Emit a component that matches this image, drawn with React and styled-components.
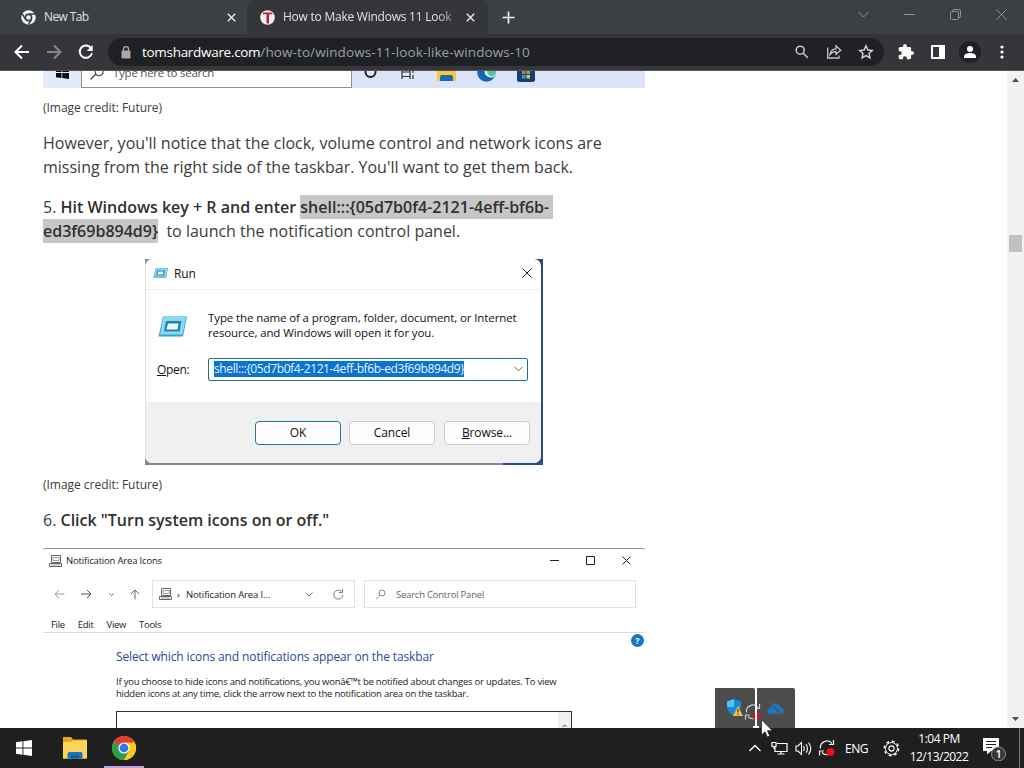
import styled, { createGlobalStyle, css } from "styled-components";

const GlobalStyle = createGlobalStyle`
  * {
    box-sizing: border-box;
  }

  body {
    margin: 0;
    overflow: hidden;
    font-family: "Open Sans", "Noto Sans", sans-serif;
  }

  svg {
    display: block;
    flex: none;
  }
`;

const Screen = styled.div`
  position: relative;
  display: flex;
  flex-direction: column;
  width: 1024px;
  height: 768px;
  overflow: hidden;
  background: #fff;
`;

/* browser frame */

const TabStrip = styled.div`
  display: flex;
  height: 34px;
  flex: none;
  background: #3c4043;
  color: #dfe1e5;
`;

const Tab = styled.div`
  display: flex;
  align-items: center;
  width: ${(props) => props.$width}px;
  padding-left: ${(props) => props.$pad}px;
  background: ${(props) => (props.$active ? "#35363a" : "transparent")};
  border-radius: 8px 8px 0 0;
`;

const TabTitle = styled.div`
  width: ${(props) => props.$width}px;
  margin: 0 ${(props) => props.$gap}px 0 8px;
  overflow: hidden;
  white-space: nowrap;
  font-size: 12px;
  line-height: 18px;
  letter-spacing: ${(props) => props.$spacing || 0}px;
  ${(props) =>
        props.$fade &&
        css`
      mask-image: linear-gradient(to right, #000 88%, rgba(0, 0, 0, 0.3));
    `}
`;

const NewTab = styled.div`
  display: flex;
  align-items: center;
  padding-left: 14px;
`;

const WindowButtons = styled.div`
  display: flex;
  width: 184px;
  height: 29px;
  margin-left: auto;
`;

const WindowButton = styled.div`
  display: flex;
  flex: 1;
  align-items: center;
  justify-content: center;
`;

const Toolbar = styled.div`
  display: flex;
  align-items: center;
  height: 37px;
  flex: none;
  padding: 0 6px;
  background: #35363a;
  border-bottom: 1px solid #55565a;
`;

const ToolButton = styled.div`
  display: flex;
  justify-content: center;
  width: 32px;
  flex: none;
`;

const Omnibox = styled.div`
  display: flex;
  align-items: center;
  width: 776px;
  height: 28px;
  margin: 0 6px;
  padding: 0 2px 0 12px;
  border-radius: 14px;
  background: #202124;
`;

const Url = styled.div`
  flex: 1;
  margin-left: 10px;
  color: #9aa0a6;
  font-size: 13.5px;
  line-height: 20px;
  letter-spacing: 0.1px;
  white-space: nowrap;
`;

const Host = styled.span`
  color: #fff;
  letter-spacing: -0.3px;
`;

const Avatar = styled.div`
  display: flex;
  align-items: center;
  justify-content: center;
  width: 22px;
  height: 22px;
  border-radius: 50%;
  background: #202124;
`;

/* article */

const Viewport = styled.div`
  display: flex;
  height: 657px;
  flex: none;
  overflow: hidden;
`;

const Article = styled.div`
  width: 645px;
  padding-left: 43px;
  color: #3c3c3c;
`;

const Spacer = styled.div`
  flex: 1;
`;

const Strip = styled.div`
  display: flex;
  height: 17px;
  overflow: hidden;
  background: #dce5f8;
`;

const StripStart = styled.div`
  display: flex;
  justify-content: center;
  width: 38px;
  background: #e2ecf9;
`;

const StripSearch = styled.div`
  display: flex;
  width: 271px;
  padding-left: 8px;
  border: solid #8d9096;
  border-width: 0 1px 1px;
  background: #fff;
`;

const StripLabel = styled.div`
  margin: -8px 0 0 9px;
  color: #555;
  font-size: 11.5px;
  line-height: 20px;
  letter-spacing: -0.25px;
  white-space: nowrap;
`;

const StripIcons = styled.div`
  display: flex;
  justify-content: space-between;
  width: 173px;
  margin-left: 10px;
`;

const Caption = styled.p`
  margin: 11px 0 0;
  font-size: 12px;
  line-height: 18px;
  letter-spacing: -0.03px;
`;

const Paragraph = styled.p`
  margin: 16px 0 0;
  font-size: 16px;
  line-height: 24px;
  white-space: nowrap;

  ${Caption} + & {
    margin-top: 14px;
  }

  b {
    color: #303030;
    font-weight: 600;
  }
`;

const Selected = styled.span`
  padding: 1px 0;
  padding-right: ${(props) => props.$trail || 0}px;
  background: #c7c7c7;
`;

/* Run dialog */

const RunFrame = styled.div`
  width: 398px;
  height: 206px;
  margin: 16px 0 0 102px;
  padding: 0 2px 2px 0;
  background: linear-gradient(90deg, #86888d 0 90%, #274b8c 90%);
`;

const RunWindow = styled.div`
  display: flex;
  flex-direction: column;
  height: 204px;
  overflow: hidden;
  border-left: 1px solid #e4e4e4;
  border-radius: 7px;
  background: #fff;
  color: #111;
  font-size: 12px;
  letter-spacing: -0.1px;
`;

const RunTitle = styled.div`
  display: flex;
  align-items: center;
  gap: 6px;
  height: 31px;
  padding: 0 9px 2px 7px;
  border-bottom: 1px solid #efefef;
`;

const RunBody = styled.div`
  height: 112px;
  padding: 20px 14px 0 11px;
`;

const RunIntro = styled.div`
  display: flex;
  gap: 20px;
`;

const RunText = styled.div`
  font-size: 11.5px;
  line-height: 15px;
  letter-spacing: -0.11px;
  white-space: nowrap;
`;

const RunField = styled.div`
  display: flex;
  align-items: center;
  margin-top: 18px;
`;

const FieldLabel = styled.div`
  width: 51px;
  flex: none;
  letter-spacing: -0.3px;
`;

const Combo = styled.div`
  display: flex;
  align-items: center;
  justify-content: space-between;
  width: 320px;
  height: 23px;
  flex: none;
  padding: 0 4px 1px 5px;
  border: 1px solid #1f6f96;
  border-radius: 2px;
`;

const ComboValue = styled.div`
  height: 16px;
  background: #0a74cf;
  color: #e6f3ff;
  font-size: 12px;
  line-height: 15px;
  letter-spacing: -0.39px;
`;

const RunFooter = styled.div`
  display: flex;
  justify-content: flex-end;
  gap: 9px;
  flex: 1;
  padding: 19px 11px 0 0;
  background: #f0f0f0;
`;

const DialogButton = styled.div`
  width: 86px;
  height: 24px;
  margin-right: ${(props) => (props.$primary ? -1 : 0)}px;
  border: 1px solid ${(props) => (props.$primary ? "#24768f" : "#cdcdcd")};
  border-radius: 4px;
  background: #fdfdfd;
  line-height: 22px;
  text-align: center;
`;

/* Notification Area Icons window */

const PanelWindow = styled.div`
  width: 602px;
  height: 200px;
  margin-top: 16px;
  border-top: 1px solid #8b9a9f;
  border-radius: 3px 3px 0 0;
  background: #fff;
  color: #222;
  font-size: 9.5px;
`;

const PanelTitle = styled.div`
  display: flex;
  align-items: center;
  height: 23px;
  padding-left: 6px;
`;

const PanelName = styled.div`
  width: 484px;
  margin-left: 4px;
  letter-spacing: -0.18px;
`;

const PanelControls = styled.div`
  display: flex;
  align-items: center;
  gap: 27px;
`;

const PanelNav = styled.div`
  display: flex;
  align-items: center;
  height: 28px;
  margin-top: 8px;
  padding-left: 11px;
`;

const NavArrows = styled.div`
  display: flex;
  align-items: center;
  justify-content: space-between;
  width: 86px;
  margin-right: 12px;
`;

const NavBox = styled.div`
  display: flex;
  align-items: center;
  width: ${(props) => props.$width}px;
  height: 28px;
  margin-right: 9px;
  padding-left: ${(props) => props.$pad}px;
  border: 1px solid #e1e1e1;
  color: ${(props) => props.$color};
`;

const NavText = styled.div`
  width: ${(props) => props.$width}px;
  margin-left: ${(props) => props.$left}px;
  letter-spacing: ${(props) => props.$spacing || 0}px;
  white-space: nowrap;
`;

const MenuBar = styled.div`
  display: flex;
  gap: 13px;
  height: 25px;
  padding: 10px 0 0 8px;
  border-bottom: 1px solid #d9dcdf;
  line-height: 14px;
  letter-spacing: -0.3px;
`;

const PanelContent = styled.div`
  display: flex;
  justify-content: space-between;
`;

const PanelMain = styled.div`
  padding: 15px 0 0 73px;
`;

const PanelHeading = styled.div`
  color: #274a94;
  font-size: 12px;
  line-height: 18px;
  letter-spacing: -0.12px;
  white-space: nowrap;
`;

const PanelText = styled.div`
  margin-top: 10px;
  font-size: 9.5px;
  line-height: 12px;
  letter-spacing: -0.23px;
  white-space: nowrap;
`;

const ListBox = styled.div`
  display: flex;
  justify-content: flex-end;
  width: 456px;
  height: 40px;
  margin-top: 11px;
  border: 1px solid #333;
`;

const ListScroll = styled.div`
  display: flex;
  justify-content: center;
  width: 13px;
  padding-top: 12px;
  background: #f0f0f0;
`;

const HelpBadge = styled.div`
  width: 13px;
  height: 13px;
  margin: 1px 1px 0 0;
  border-radius: 50%;
  background: #1478c4;
  color: #fff;
  font-size: 9px;
  font-weight: 700;
  line-height: 13px;
  text-align: center;
`;

const Scrollbar = styled.div`
  display: flex;
  flex-direction: column;
  align-items: center;
  width: 17px;
  padding: 7px 0 7px;
  background: #f1f1f1;
`;

const Thumb = styled.div`
  width: 13px;
  height: 17px;
  margin-top: 153px;
  margin-bottom: auto;
  background: #c1c1c1;
`;

/* windows taskbar */

const Taskbar = styled.div`
  display: flex;
  height: 40px;
  flex: none;
  background: #201f1f;
  color: #fff;
`;

const TaskButton = styled.div`
  display: flex;
  align-items: center;
  justify-content: center;
  width: ${(props) => props.$width}px;
  margin-right: ${(props) => props.$gap || 0}px;
  border-bottom: 2px solid ${(props) => (props.$active ? "#c69cd9" : "transparent")};
  padding-top: 2px;
`;

const Tray = styled.div`
  display: flex;
  align-items: center;
  margin-left: auto;
`;

const TrayItem = styled.div`
  display: flex;
  justify-content: center;
  width: ${(props) => props.$width || 24}px;
  font-size: 12px;
  letter-spacing: -0.5px;
`;

const Clock = styled.div`
  width: 62px;
  font-size: 12px;
  line-height: 18px;
  letter-spacing: -0.5px;
  text-align: center;
  white-space: nowrap;
`;

const Peek = styled.div`
  width: 5px;
  height: 40px;
  border-left: 1px solid #777;
`;

const HiddenIcons = styled.div`
  position: absolute;
  left: 715px;
  top: 688px;
  display: flex;
  gap: 2px;
`;

const HiddenTile = styled.div`
  display: flex;
  align-items: center;
  justify-content: center;
  width: ${(props) => props.$width}px;
  height: 40px;
  border-radius: 0 2px 0 0;
  background: #4c4c4c;
`;

const DragGhost = styled.div`
  position: absolute;
  left: 744px;
  top: 703px;
  opacity: 0.8;
`;

const TextCaret = styled.div`
  position: absolute;
  left: 752px;
  top: 688px;
`;

const Pointer = styled.div`
  position: absolute;
  left: 761px;
  top: 719px;
`;

const Stroke = ({ w, h = w, d, color = "#fff", width = 1, ...rest }) => (
    <svg width={w} height={h} viewBox={`0 0 ${w} ${h}`} fill="none" stroke={color} strokeWidth={width} {...rest}>
        <path d={d} />
    </svg>
);

const ChromeMono = () => (
    <svg width="15" height="15" viewBox="0 0 16 16">
        <circle cx="8" cy="8" r="7.7" fill="#f1f3f4" />
        <circle cx="8" cy="8" r="3.3" fill="#f1f3f4" stroke="#3c4043" strokeWidth="1.7" />
        <path d="M8 4.2H15M4.7 9.9 1.4 4.2M11.3 9.9 7.9 15.6" stroke="#3c4043" strokeWidth="1.5" />
    </svg>
);

const ChromeColor = () => (
    <svg width="24" height="24" viewBox="0 0 24 24">
        <circle cx="12" cy="12" r="12" fill="#f9c61f" />
        <path d="M12 12 1.6 6A12 12 0 0 1 22.4 6Z" fill="#e23c2f" />
        <path d="M1.6 6A12 12 0 0 0 12 24L17.2 15 12 12Z" fill="#27a04b" />
        <path d="M12 6.5H22.7A12 12 0 0 1 12 24L17 15Z" fill="#fccb1f" />
        <circle cx="12" cy="12" r="5.6" fill="#fff" />
        <circle cx="12" cy="12" r="4.4" fill="#3478e8" />
    </svg>
);

const HardwareLogo = () => (
    <svg width="15" height="15" viewBox="0 0 15 15">
        <circle cx="7.5" cy="7.5" r="7.3" fill="#f4eef0" />
        <path d="M3 2.4H11.5L13 4.3H9V13.6H6.5V4.3H3Z" fill="#c21b3b" />
    </svg>
);

const Reload = () => (
    <svg width="16" height="16" viewBox="0 0 16 16">
        <path d="M13.2 4.2A6.2 6.2 0 1 0 14 9.2" fill="none" stroke="#fff" strokeWidth="2" />
        <path d="M14.7 1V7H8.7Z" fill="#fff" />
    </svg>
);

const Puzzle = () => (
    <svg width="16" height="16" viewBox="1 1 22 22">
        <path
            d="M20.5 11H19V7c0-1.1-.9-2-2-2h-4V3.5a2.5 2.5 0 0 0-5 0V5H4c-1.1 0-2 .9-2 2v3.8h1.5a2.7 2.7 0 0 1 0 5.4H2V20c0 1.1.9 2 2 2h3.8v-1.5a2.7 2.7 0 0 1 5.4 0V22H17c1.1 0 2-.9 2-2v-4h1.5a2.5 2.5 0 0 0 0-5z"
            fill="#fff"
        />
    </svg>
);

const Share = () => (
    <Stroke
        w={16}
        color="#c4c7ca"
        width={1.3}
        d="M1.7 3.5V14H13V11.5M4 10.5C4.5 6.5 7 5 10 4.8V1.8L14.7 6.2L10 10.3V7.6C7.5 7.5 5.5 8.5 4 10.5Z"
    />
);

const RunIcon = ({ w, h }) => (
    <svg width={w} height={h} viewBox="0 0 29 21" preserveAspectRatio="none">
        <path d="M5 .5H29L25 20.5H.5Z" fill="#3d9fcb" />
        <path d="M5.5 1H28L24.5 18.5H2Z" fill="#84dcf5" />
        <path d="M8 5H23.5L21.5 15.5H6Z" fill="#2a81ae" />
        <path d="M10 7.5H20.5L19.5 13.5H8.5Z" fill="#e5fbff" />
    </svg>
);

const RunIconBox = styled.div`
  width: 31px;
  padding: 6px 0 0 1px;
`;

const PanelIcon = () => (
    <svg width="13" height="12" viewBox="0 0 13 12" fill="none" stroke="#666">
        <path d="M2.5.5H11.5V7.5H2.5Z M.5 8.5H12.5V11.5H.5Z" />
        <path d="M4 2.5H10V5.5H4ZM2 10H11" strokeWidth=".8" stroke="#888" />
    </svg>
);

const WindowsLogo = () => (
    <svg width="16" height="16" viewBox="0 0 16 16" fill="#fff">
        <path d="M0 2.3 6.5 1.3V7.5H0ZM7.4 1.2 16 0V7.5H7.4ZM0 8.4H6.5V14.7L0 13.7ZM7.4 8.4H16V16L7.4 14.8Z" />
    </svg>
);

const Folder = () => (
    <svg width="24" height="22" viewBox="0 0 24 22">
        <path d="M0 0H8L10 2.5H24V21.5H0Z" fill="#e8a51d" />
        <path d="M0 5H8L10 3.5H24V21.5H0Z" fill="#ffd45c" />
        <path d="M4.5 21.5V17Q4.5 15 6.5 15H17.5Q19.5 15 19.5 17V21.5Z" fill="#1576bd" />
        <path d="M8 18.5H16V21.5H8Z" fill="#0b5b9e" />
    </svg>
);

const EdgeBottom = () => (
    <svg width="19" height="11" viewBox="0 8 19 11">
        <circle cx="9.5" cy="9.5" r="9.3" fill="#1269ae" />
        <path d="M8 6C6 12 11 16 17 14A9.3 9.3 0 0 0 18.5 7Z" fill="#d8eff8" />
        <path d="M10.5 6C9.5 11 12 14 16 13Q19 11 18.5 7Z" fill="#55c29a" />
    </svg>
);

const StoreBottom = () => (
    <svg width="18" height="11" viewBox="0 7 18 11">
        <rect width="18" height="18" rx="2.5" fill="#173f74" />
        <path d="M5 6H8.5V10H5Z" fill="#e8663d" />
        <path d="M9.5 6H13V10H9.5Z" fill="#76b83f" />
        <path d="M5 11H8.5V14.5H5Z" fill="#28a0db" />
        <path d="M9.5 11H13V14.5H9.5Z" fill="#efc33c" />
    </svg>
);

const SyncIcon = () => (
    <svg width="18" height="18" viewBox="0 0 18 18">
        <path
            d="M2.5 9.5A6.5 6.5 0 0 1 14 4.5M15.5 1V5.5H11M14 12.5A6 6 0 0 1 4 13.5M1.5 16.5V12H6"
            fill="none"
            stroke="#eee"
            strokeWidth="1.2"
        />
        <circle cx="12.5" cy="13" r="4" fill="#ee1018" />
    </svg>
);

const Gear = () => (
    <svg width="17" height="17" viewBox="0 0 17 17" fill="none" stroke="#fff">
        <circle cx="8.5" cy="8.5" r="7.2" strokeWidth="1.4" strokeDasharray="2.827 2.827" />
        <circle cx="8.5" cy="8.5" r="6" strokeWidth="1" />
        <circle cx="8.5" cy="8.5" r="2.6" strokeWidth="1.1" />
    </svg>
);

const Notifications = () => (
    <svg width="26" height="26" viewBox="0 0 26 26">
        <path d="M1 3H17V16H9L5 19.5V16H1Z" fill="#fff" />
        <path d="M4 6.5H14M4 9.5H14M4 12.5H10" stroke="#201f1f" strokeWidth="1.2" />
        <circle cx="16.5" cy="19" r="7" fill="#393939" stroke="#8c8c8c" />
        <text x="16.5" y="23" fill="#fff" fontSize="11" fontWeight="600" fontFamily="Open Sans" textAnchor="middle">
            1
        </text>
    </svg>
);

const Browser = () => (
    <>
        <TabStrip>
            <Tab $width={247} $pad={21}>
                <ChromeMono />
                <TabTitle $width={170} $gap={13} $spacing={-0.6}>New Tab</TabTitle>
                <Stroke w={9} color="#e4e6e8" width={1.5} d="M.8.8 8.2 8.2M8.2.8.8 8.2" />
            </Tab>
            <Tab $width={241} $pad={13} $active>
                <HardwareLogo />
                <TabTitle $width={174} $gap={9} $spacing={-0.24} $fade>How to Make Windows 11 Look</TabTitle>
                <Stroke w={9} color="#e4e6e8" width={1.5} d="M.8.8 8.2 8.2M8.2.8.8 8.2" />
            </Tab>
            <NewTab>
                <Stroke w={13} color="#f1f3f4" width={1.7} d="M6.5.5V12.5M.5 6.5H12.5" />
            </NewTab>
            <WindowButtons>
                <WindowButton>
                    <Stroke w={11} h={7} color="#8f9395" d="M.5 1 5.5 6 10.5 1" />
                </WindowButton>
                <WindowButton>
                    <Stroke w={11} h={1} color="#8f9395" d="M0 .5H11" />
                </WindowButton>
                <WindowButton>
                    <Stroke w={11} color="#8f9395" d="M2.5 2.5V2Q2.5.5 4 .5H9Q10.5.5 10.5 2V7Q10.5 8.5 9 9M1.5 2.5H7.5Q8.5 2.5 8.5 3.5V9.5Q8.5 10.5 7.5 10.5H1.5Q.5 10.5.5 9.5V3.5Q.5 2.5 1.5 2.5Z" />
                </WindowButton>
                <WindowButton>
                    <Stroke w={11} color="#8f9395" d="M.5.5 10.5 10.5M10.5.5.5 10.5" />
                </WindowButton>
            </WindowButtons>
        </TabStrip>
        <Toolbar>
            <ToolButton>
                <Stroke w={16} width={2} d="M15 8H2M8 1.5 1.5 8 8 14.5" />
            </ToolButton>
            <ToolButton>
                <Stroke w={16} width={2} color="#85878a" d="M1 8H14M8 1.5 14.5 8 8 14.5" />
            </ToolButton>
            <ToolButton>
                <Reload />
            </ToolButton>
            <Omnibox>
                <svg width="12" height="13" viewBox="0 0 12 13">
                    <rect x="1.5" y="4.5" width="9" height="8" rx="1" fill="#a5a9ac" />
                    <path d="M3.5 5V3.2a2.5 2.5 0 0 1 5 0V5" fill="none" stroke="#a5a9ac" strokeWidth="1.3" />
                </svg>
                <Url><Host>tomshardware.com</Host>/how-to/windows-11-look-like-windows-10</Url>
                <ToolButton>
                    <Stroke w={14} color="#c4c7ca" width={1.6} d="M9.2 5.2a4 4 0 1 1-8 0 4 4 0 0 1 8 0M8.2 8.2 12.8 12.8" />
                </ToolButton>
                <ToolButton>
                    <Share />
                </ToolButton>
                <ToolButton>
                    <Stroke w={16} color="#d4d6d8" width={1.4} d="M8 1.8 9.9 6 14.3 6.5 11 9.5 11.9 13.9 8 11.6 4.1 13.9 5 9.5 1.7 6.5 6.1 6Z" />
                </ToolButton>
            </Omnibox>
            <ToolButton>
                <Puzzle />
            </ToolButton>
            <ToolButton>
                <svg width="14" height="14" viewBox="0 0 14 14">
                    <path d="M0 0H14V14H0ZM2 2V12H8V2Z" fill="#fff" fillRule="evenodd" />
                </svg>
            </ToolButton>
            <ToolButton>
                <Avatar>
                    <svg width="12" height="12" viewBox="0 0 12 12" fill="#fff">
                        <circle cx="6" cy="3" r="3" />
                        <path d="M0 12V10.5C0 8 3.5 7 6 7S12 8 12 10.5V12Z" />
                    </svg>
                </Avatar>
            </ToolButton>
            <ToolButton>
                <svg width="4" height="14" viewBox="0 0 4 14" fill="#fff">
                    <circle cx="2" cy="2" r="1.6" />
                    <circle cx="2" cy="7" r="1.6" />
                    <circle cx="2" cy="12" r="1.6" />
                </svg>
            </ToolButton>
        </Toolbar>
    </>
);

const SearchStrip = () => (
    <Strip>
        <StripStart>
            <svg width="13" height="8" viewBox="0 0 13 8" fill="#080808">
                <path d="M0 0H5.5V1H0ZM6.3 0H13V1H6.3ZM0 2H5.5V7L0 6.2ZM6.3 2H13V8L6.3 7.1Z" />
            </svg>
        </StripStart>
        <StripSearch>
            <Stroke w={14} h={9} color="#444" width={1.1} d="M13 0A4 4 0 0 1 5.5 2.5L5 0M6 3 .5 8.5" />
            <StripLabel>Type here to search</StripLabel>
        </StripSearch>
        <StripIcons>
            <Stroke w={16} h={9} color="#222" width={2} d="M3.5 0V1A5 5 0 0 0 13.5 1V0" />
            <Stroke w={16} h={9} color="#333" width={1.2} d="M3 0V8M3 5.5H11M3 1H11M11 0V8M14 0V2M14 4V8" />
            <svg width="19" height="10" viewBox="0 0 19 10">
                <path d="M0 0H19V10H0Z" fill="#fac63c" />
                <path d="M3 10V6Q3 4 5 4H14Q16 4 16 6V10Z" fill="#176eb2" />
            </svg>
            <EdgeBottom />
            <StoreBottom />
        </StripIcons>
    </Strip>
);

const RunDialog = () => (
    <RunFrame>
        <RunWindow>
            <RunTitle>
                <RunIcon w={15} h={10} />
                <span>Run</span>
                <Spacer />
                <Stroke w={10} color="#222" d="M.5.5 9.5 9.5M9.5.5.5 9.5" />
            </RunTitle>
            <RunBody>
                <RunIntro>
                    <RunIconBox>
                        <RunIcon w={29} h={21} />
                    </RunIconBox>
                    <div>
                        <RunText>Type the name of a program, folder, document, or Internet</RunText>
                        <RunText>resource, and Windows will open it for you.</RunText>
                    </div>
                </RunIntro>
                <RunField>
                    <FieldLabel><u>O</u>pen:</FieldLabel>
                    <Combo>
                        <ComboValue>shell:::&#123;05d7b0f4-2121-4eff-bf6b-ed3f69b894d9&#125;</ComboValue>
                        <Stroke w={9} h={6} color="#666" d="M.5.8 4.5 4.8 8.5.8" />
                    </Combo>
                </RunField>
            </RunBody>
            <RunFooter>
                <DialogButton $primary>OK</DialogButton>
                <DialogButton>Cancel</DialogButton>
                <DialogButton><u>B</u>rowse...</DialogButton>
            </RunFooter>
        </RunWindow>
    </RunFrame>
);

const NotificationPanel = () => (
    <PanelWindow>
        <PanelTitle>
            <PanelIcon />
            <PanelName>Notification Area Icons</PanelName>
            <PanelControls>
                <Stroke w={9} h={1} color="#222" d="M0 .5H9" />
                <Stroke w={9} color="#222" d="M.5.5H8.5V8.5H.5Z" />
                <Stroke w={9} color="#222" d="M.5.5 8.5 8.5M8.5.5.5 8.5" />
            </PanelControls>
        </PanelTitle>
        <PanelNav>
            <NavArrows>
                <Stroke w={11} h={10} color="#999" d="M1 5H10.5M5 1 1 5 5 9" />
                <Stroke w={11} h={10} color="#555" d="M0 5H10M6 1 10 5 6 9" />
                <Stroke w={5} h={3} color="#666" d="M.5.5 2.5 2.5 4.5.5" />
                <Stroke w={10} h={11} color="#666" d="M5 10.5V1M1 5 5 1 9 5" />
            </NavArrows>
            <NavBox $width={203} $pad={6} $color="#222">
                <PanelIcon />
                <NavText $width={5} $left={5}>›</NavText>
                <NavText $width={119} $left={4} $spacing={-0.13}>Notification Area I...</NavText>
                <Stroke w={8} h={5} color="#777" d="M.5.5 4 4 7.5.5" />
                <Spacer />
                <Stroke w={21} h={11} color="#777" d="M8.5 2.5A4.5 4.5 0 1 0 9.8 6M9.5 0V3.5H6" />
            </NavBox>
            <NavBox $width={272} $pad={10} $color="#666">
                <Stroke w={11} color="#888" d="M10 4A3 3 0 1 1 4 4 3 3 0 0 1 10 4M5 6.2 1 10.5" />
                <NavText $width={150} $left={10} $spacing={-0.22}>Search Control Panel</NavText>
            </NavBox>
        </PanelNav>
        <MenuBar>
            <span>File</span>
            <span>Edit</span>
            <span>View</span>
            <span>Tools</span>
        </MenuBar>
        <PanelContent>
            <PanelMain>
                <PanelHeading>Select which icons and notifications appear on the taskbar</PanelHeading>
                <PanelText>
                    If you choose to hide icons and notifications, you wonâ€™t be notified about changes or updates. To view
                    <br />
                    hidden icons at any time, click the arrow next to the notification area on the taskbar.
                </PanelText>
                <ListBox>
                    <ListScroll>
                        <Stroke w={5} h={4} color="#555" d="M.5 3 2.5.8 4.5 3" />
                    </ListScroll>
                </ListBox>
            </PanelMain>
            <HelpBadge>?</HelpBadge>
        </PanelContent>
    </PanelWindow>
);

const WindowsTaskbar = () => (
    <Taskbar>
        <TaskButton $width={48}>
            <WindowsLogo />
        </TaskButton>
        <TaskButton $width={54} $gap={2}>
            <Folder />
        </TaskButton>
        <TaskButton $width={40} $active>
            <ChromeColor />
        </TaskButton>
        <Tray>
            <TrayItem>
                <Stroke w={12} h={8} width={1.3} d="M.5 7 6 1.5 11.5 7" />
            </TrayItem>
            <TrayItem>
                <Stroke w={17} h={14} width={1.2} d="M6 2.5H16V10.5H4V6M10 10.5V13M6.5 13H13.5M1 1.5H5V5.5H1Z M3 5.5V8" />
            </TrayItem>
            <TrayItem>
                <Stroke w={17} h={15} width={1.1} d="M1 5H3L6.5 1.5V13.5L3 10H1ZM8.5 5Q10 7.5 8.5 10M11 3.2Q14 7.5 11 11.8M13.5 1.5Q18 7.5 13.5 13.5" />
            </TrayItem>
            <TrayItem>
                <SyncIcon />
            </TrayItem>
            <TrayItem $width={35}>ENG</TrayItem>
            <TrayItem $width={34}>
                <Gear />
            </TrayItem>
            <Clock>
                <div>1:04 PM</div>
                <div>12/13/2022</div>
            </Clock>
            <TrayItem $width={49}>
                <Notifications />
            </TrayItem>
            <Peek />
        </Tray>
    </Taskbar>
);

function App() {
    return (
        <Screen>
            <GlobalStyle />
            <Browser />
            <Viewport>
                <Article>
                    <SearchStrip />
                    <Caption>(Image credit: Future)</Caption>
                    <Paragraph>
                        However, you'll notice that the clock, volume control and network icons are
                        <br />
                        missing from the right side of the taskbar. You'll want to get them back.
                    </Paragraph>
                    <Paragraph>
                        5. <b>Hit Windows key + R and enter <Selected $trail={4}>shell:::&#123;05d7b0f4-2121-4eff-bf6b-</Selected></b>
                        <br />
                        <b><Selected>ed3f69b894d9&#125;</Selected></b>&nbsp; to launch the notification control panel.
                    </Paragraph>
                    <RunDialog />
                    <Caption>(Image credit: Future)</Caption>
                    <Paragraph>
                        6. <b>Click "Turn system icons on or off."</b>
                    </Paragraph>
                    <NotificationPanel />
                </Article>
                <Spacer />
                <Scrollbar>
                    <svg width="7" height="4" viewBox="0 0 7 4">
                        <path d="M0 4 3.5 0 7 4Z" fill="#505050" />
                    </svg>
                    <Thumb />
                    <svg width="7" height="4" viewBox="0 0 7 4">
                        <path d="M0 0H7L3.5 4Z" fill="#505050" />
                    </svg>
                </Scrollbar>
            </Viewport>
            <WindowsTaskbar />
            <HiddenIcons>
                <HiddenTile $width={40}>
                    <svg width="16" height="18" viewBox="0 0 16 18">
                        <path d="M7 0 14 2.5V8Q13 14 7 17 1 14 0 8V2.5Z" fill="#1789d8" />
                        <path d="M7 0V8H0V2.5Z" fill="#54c3f2" />
                        <path d="M11 7 16 17H6Z" fill="#f4c23a" />
                        <path d="M11 10V13.5M11 14.7V16" stroke="#333" strokeWidth="1.2" />
                    </svg>
                </HiddenTile>
                <HiddenTile $width={38}>
                    <svg width="18" height="15" viewBox="0 0 18 15">
                        <path d="M3 13Q-.5 12 1 8.5L3 7Q4 2 9 2.5 13 3 13.5 6.5 17.5 7 17 10.5 16.5 13 14 13Z" fill="#1779c4" />
                        <path d="M1 1.5 15.5 14" stroke="#5d4f51" strokeWidth="2" />
                    </svg>
                </HiddenTile>
            </HiddenIcons>
            <DragGhost>
                <SyncIcon />
            </DragGhost>
            <TextCaret>
                <Stroke w={8} h={40} width={2} d="M4 0V39M1 39H7" />
            </TextCaret>
            <Pointer>
                <svg width="12" height="19" viewBox="0 0 12 19">
                    <path d="M.5.5V16L4 12.7 6.3 18 8.7 17 6.5 11.7H11.3Z" fill="#fff" stroke="#222" strokeWidth=".8" />
                </svg>
            </Pointer>
        </Screen>
    );
}

export default App;
